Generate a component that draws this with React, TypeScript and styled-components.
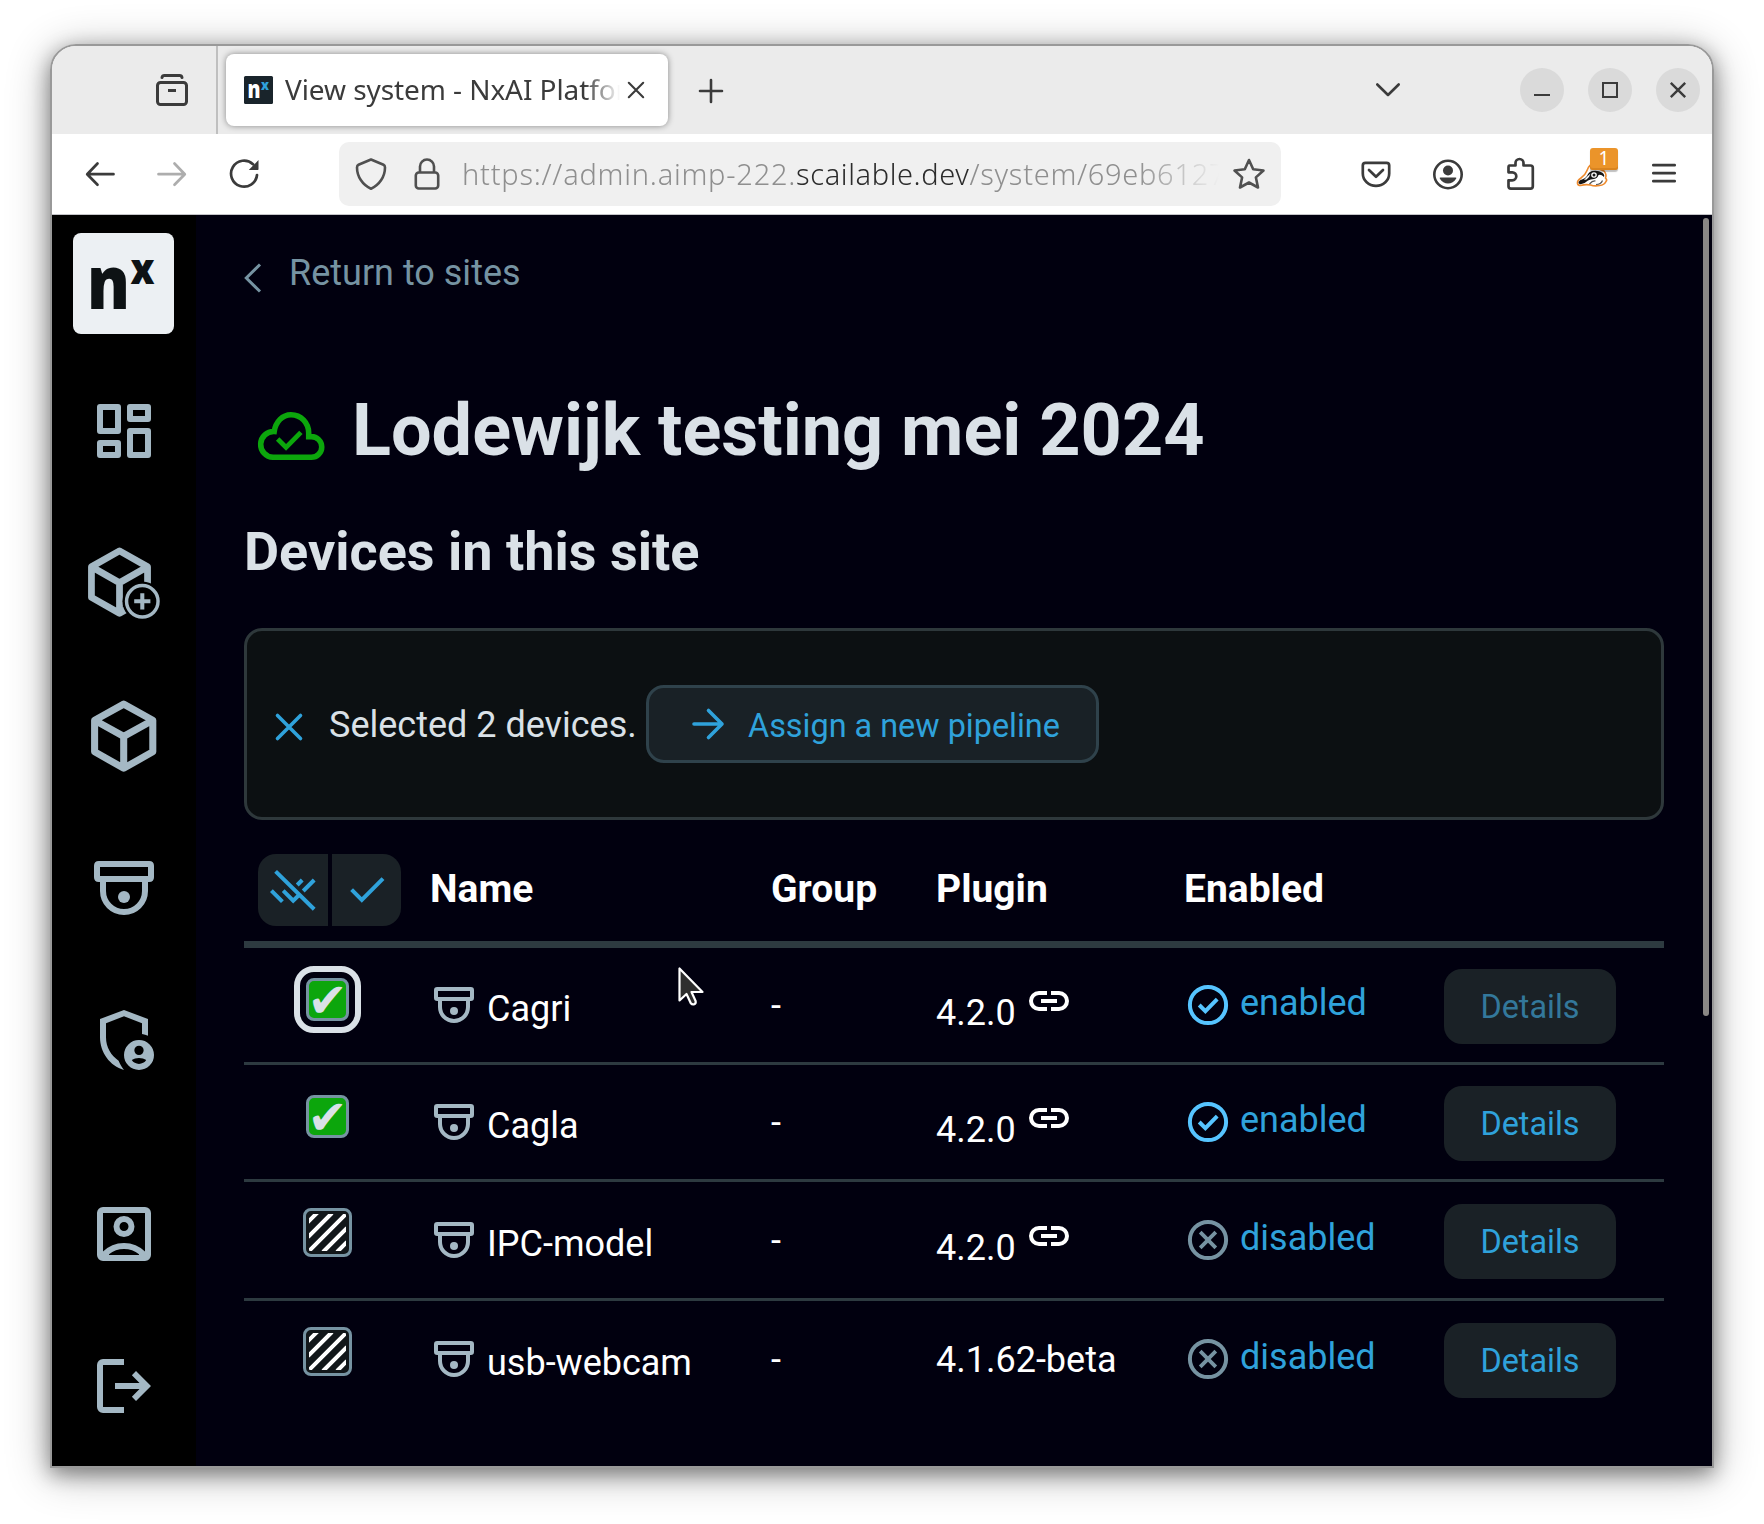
import React from "react";
import styled, { createGlobalStyle } from "styled-components";

const color = {
  chrome: "#ebebeb",
  ink: "#3b3b3b",
  page: "#01000f",
  text: "#dae1e7",
  nav: "#a4b8c4",
  muted: "#7693a2",
  link: "#2fa2db",
  surface: "#1a2126",
  line: "#2d3a40",
  green: "#0ca60c",
};

const GlobalStyle = createGlobalStyle`
  * { box-sizing: border-box; }
  body { margin: 0; background: #fff; overflow: hidden; }
  svg { display: block; flex: none; overflow: visible; }
  button { font: inherit; border: 0; padding: 0; margin: 0; color: inherit; background: none; }
`;

/* ---------- window ---------- */

const Desktop = styled.div`
  width: 1764px;
  height: 1524px;
  padding: 44px 50px;
`;

const Window = styled.div`
  width: 1664px;
  height: 1424px;
  border: 2px solid #999;
  border-radius: 26px 26px 0 0;
  overflow: hidden;
  display: flex;
  flex-direction: column;
  box-shadow: 0 6px 20px rgba(0, 0, 0, 0.4), 0 6px 44px rgba(0, 0, 0, 0.3);
  font-family: Roboto, sans-serif;
`;

const chromeFont = `font-family: "Noto Sans", "Open Sans", sans-serif;`;

const TabStrip = styled.div`
  height: 88px;
  flex: none;
  display: flex;
  align-items: center;
  background: ${color.chrome};
  color: ${color.ink};
  padding-right: 12px;
`;

const ViewSlot = styled.div`
  width: 166px;
  height: 88px;
  padding: 28px 0 0 104px;
  border-right: 2px solid #bfbfbf;
`;

const Tab = styled.div`
  width: 442px;
  height: 72px;
  margin-left: 8px;
  padding: 0 24px 0 18px;
  display: flex;
  align-items: center;
  background: #fff;
  border-radius: 8px;
  box-shadow: 0 0 6px rgba(0, 0, 0, 0.42);
`;

const TabTitle = styled.div`
  ${chromeFont}
  flex: 1;
  margin: -3px 8px 0 12px;
  overflow: hidden;
  white-space: nowrap;
  font-size: 28px;
  letter-spacing: -0.08px;
  line-height: 40px;
  mask-image: linear-gradient(to right, #000 calc(100% - 36px), transparent);
`;

const PlusSlot = styled.div`
  margin: 2px auto 0 31px;
`;

const WindowButtons = styled.div`
  display: flex;
  gap: 24px;
  margin-left: 120px;
`;

const RoundButton = styled.div`
  width: 44px;
  height: 44px;
  border-radius: 50%;
  background: #dadada;
  display: grid;
  place-items: center;
`;

const Toolbar = styled.div`
  height: 81px;
  flex: none;
  display: flex;
  align-items: center;
  background: #fff;
  border-bottom: 1px solid #c4c4c8;
  padding: 0 32px;
  color: ${color.ink};
`;

const HistoryButtons = styled.div`
  display: flex;
  gap: 40px;
  width: 255px;
`;

const AddressBar = styled.div`
  width: 942px;
  height: 64px;
  border-radius: 10px;
  background: #f0f0f0;
  display: flex;
  align-items: center;
  padding: 0 16px;
  color: #505050;
`;

const LockSlot = styled.div`
  margin-left: 24px;
`;

const Address = styled.div`
  ${chromeFont}
  width: 759px;
  margin: 0 12px 0 19px;
  overflow: hidden;
  white-space: nowrap;
  font-size: 29px;
  font-weight: 300;
  line-height: 44px;
  color: #8f8f8f;
  mask-image: linear-gradient(to right, #000 calc(100% - 84px), transparent calc(100% - 2px));
`;

const UrlPart = styled.span<{ $spacing: number; $strong?: boolean }>`
  letter-spacing: ${(p) => p.$spacing}px;
  color: ${(p) => (p.$strong ? "#2c2c2c" : "inherit")};
`;

const ToolbarActions = styled.div`
  margin-left: auto;
  display: flex;
  align-items: center;
  gap: 40px;
`;

const Extension = styled.div`
  position: relative;
`;

const Badge = styled.span`
  ${chromeFont}
  position: absolute;
  left: 14px;
  top: -10px;
  width: 28px;
  height: 22px;
  border-radius: 3px;
  background: #eb942a;
  box-shadow: 0 2px 1px rgba(0, 0, 0, 0.25), inset 0 -2px 0 #d98420;
  color: #fff;
  font-size: 19px;
  line-height: 20px;
  text-align: center;
`;

/* ---------- application ---------- */

const AppArea = styled.div`
  flex: 1;
  min-height: 0;
  display: flex;
  background: ${color.page};
`;

const Sidebar = styled.nav`
  width: 144px;
  background: #000;
  color: ${color.nav};
  display: flex;
  flex-direction: column;
  align-items: center;
  padding: 18px 0 44px;
`;

const Logo = styled.div`
  width: 101px;
  height: 101px;
  border-radius: 8px;
  background: #ecf0f3;
  margin: 0 1px 61px 0;
`;

const NavGroup = styled.div`
  display: flex;
  flex-direction: column;
  gap: 80.3px;
`;

const NavFooter = styled(NavGroup)`
  margin-top: auto;
`;

const Main = styled.main`
  flex: 1;
  position: relative;
  padding: 0 48px;
  color: ${color.text};
`;

const Scrollbar = styled.div`
  position: absolute;
  right: 3px;
  top: 3px;
  width: 6px;
  height: 798px;
  border-radius: 3px;
  background: #8a8785;
`;

const BackLink = styled.a`
  display: flex;
  align-items: center;
  height: 60px;
  margin-top: 28px;
  gap: 27px;
  font-size: 36px;
  color: ${color.muted};
  svg { margin-top: 9px; }
`;

const Title = styled.h1`
  margin: 84px 0 0;
  padding-left: 11px;
  height: 88px;
  display: flex;
  align-items: center;
  gap: 25px;
  font-size: 72px;
  line-height: 88px;
  font-weight: 700;
  svg { margin-top: 10px; color: ${color.green}; }
`;

const Subtitle = styled.h2`
  margin: 47px 0 0;
  height: 60px;
  line-height: 60px;
  font-size: 54px;
  font-weight: 700;
`;

const SelectionPanel = styled.section`
  margin-top: 46px;
  width: 1420px;
  height: 192px;
  border: 3px solid #2e383b;
  border-radius: 18px;
  background: #0c1012;
  display: flex;
  align-items: center;
  padding-left: 28px;
  font-size: 36px;
  svg { color: ${color.link}; }
  > svg { margin-top: 6px; }
`;

const SelectedText = styled.span`
  margin: 2px 11px 0 26px;
  width: 306px;
  white-space: nowrap;
`;

const AssignButton = styled.button`
  width: 453px;
  height: 78px;
  border: 3px solid #2f424b;
  border-radius: 18px;
  background: #192126;
  color: ${color.link};
  font-size: 32.4px;
  display: flex;
  align-items: center;
  padding: 0 0 0 43px;
  gap: 24px;
  span { padding-top: 4px; white-space: nowrap; }
  svg { margin-top: -1px; }
`;

const columns = "186px 341px 165px 248px 260px 1fr";

const TableHead = styled.div`
  display: grid;
  grid-template-columns: ${columns};
  width: 1420px;
  height: 128px;
  padding-top: 34px;
  border-bottom: 7px solid ${color.line};
  font-size: 39px;
  font-weight: 700;
  color: #fff;
  line-height: 71px;
`;

const HeadCell = styled.div``;

const SelectButtons = styled.div`
  display: flex;
  gap: 4px;
  padding-left: 14px;
`;

const SelectButton = styled.button<{ $side: "left" | "right" }>`
  width: ${(p) => (p.$side === "left" ? 70 : 69)}px;
  height: 72px;
  background: ${color.surface};
  color: ${color.link};
  border-radius: ${(p) => (p.$side === "left" ? "18px 0 0 18px" : "0 18px 18px 0")};
  display: grid;
  place-items: center;
`;

const Row = styled.div<{ $tall?: boolean }>`
  display: grid;
  grid-template-columns: ${columns};
  width: 1420px;
  height: ${(p) => (p.$tall ? 119 : 117)}px;
  padding-top: ${(p) => (p.$tall ? 1 : 0)}px;
  font-size: 36px;
  line-height: 42px;
  color: #fff;
  &:not(:last-child) { border-bottom: 3px solid ${color.line}; }
`;

const CheckCell = styled.div<{ $checked: boolean }>`
  display: flex;
  justify-content: center;
  padding: ${(p) => (p.$checked ? 30 : 25)}px 19px 0 0;
`;

const CheckBox = styled.div<{ $checked: boolean; $focus?: boolean }>`
  width: ${(p) => (p.$checked ? 43 : 49)}px;
  height: ${(p) => (p.$checked ? 43 : 49)}px;
  border: 3px solid ${color.muted};
  border-radius: 8px;
  background: ${(p) => (p.$checked ? color.green : "#12171a")};
  color: ${color.text};
  outline: ${(p) => (p.$focus ? `6px solid ${color.text}` : "none")};
  outline-offset: 6.5px;
  font-family: "DejaVu Sans", sans-serif;
  font-size: 48px;
  line-height: 36px;
  display: flex;
  align-items: center;
  justify-content: center;
`;

const NameCell = styled.div`
  display: flex;
  gap: 9px;
  padding-top: 33px;
  span { padding-top: 7px; }
  svg { color: ${color.nav}; }
`;

const GroupCell = styled.div`
  padding-top: 37px;
`;

const PluginCell = styled.div<{ $linked: boolean }>`
  display: flex;
  gap: 9px;
  padding-top: ${(p) => (p.$linked ? 29 : 37)}px;
  span { padding-top: ${(p) => (p.$linked ? 15 : 0)}px; }
`;

const StateCell = styled.div<{ $on: boolean }>`
  display: flex;
  gap: 8px;
  padding-top: 33px;
  color: ${color.link};
  span { padding-top: 1px; }
  svg { color: ${(p) => (p.$on ? "#56c4ff" : color.muted)}; }
`;

const DetailsButton = styled.button<{ $dim?: boolean }>`
  width: 172px;
  height: 75px;
  margin-top: 21px;
  border-radius: 18px;
  background: ${color.surface};
  color: ${(p) => (p.$dim ? "#33789b" : color.link)};
  font-size: 32.4px;
`;

const Pointer = styled.div`
  position: absolute;
  left: 482px;
  top: 751px;
`;

/* ---------- icons ---------- */

type IconProps = { size?: number };

const Svg = ({
  size = 72,
  box = 24,
  stroke,
  children,
}: {
  size?: number;
  box?: number;
  stroke?: number;
  children: React.ReactNode;
}) => (
  <svg
    width={size}
    height={size}
    viewBox={`0 0 ${box} ${box}`}
    fill={stroke ? "none" : "currentColor"}
    stroke={stroke ? "currentColor" : "none"}
    strokeWidth={stroke}
  >
    {children}
  </svg>
);

const DashboardIcon = () => (
  <Svg>
    <path
      fillRule="evenodd"
      d="M4 3h6q1 0 1 1v8q0 1-1 1H4q-1 0-1-1V4q0-1 1-1zm1 2v6h4V5zM14 3h6q1 0 1 1v4q0 1-1 1h-6q-1 0-1-1V4q0-1 1-1zm1 2v2h4V5zM4 15h6q1 0 1 1v4q0 1-1 1H4q-1 0-1-1v-4q0-1 1-1zm1 2v2h4v-2zM14 11h6q1 0 1 1v8q0 1-1 1h-6q-1 0-1-1v-8q0-1 1-1zm1 2v6h4v-6z"
    />
  </Svg>
);

const CubeAddIcon = () => (
  <Svg stroke={2.25}>
    <path
      strokeLinejoin="round"
      d="M10.5 1.3l9.35 5.3v10.2l-9.35 5.3-9.35-5.3V6.6zM1.15 6.6l9.35 5.3 9.35-5.3M10.5 11.9v10.2"
    />
    <circle cx="18.1" cy="18.1" r="6.6" fill="#000" stroke="none" />
    <circle cx="18.1" cy="18.1" r="5.25" strokeWidth="1.15" />
    <path strokeWidth="1.35" d="M18.1 15.4v5.4M15.4 18.1h5.4" />
  </Svg>
);

const CubeIcon = () => (
  <Svg stroke={2.35}>
    <path
      strokeLinejoin="round"
      d="M11.9 1.35l9.7 5.4v10.5l-9.7 5.5-9.7-5.5V6.75zM2.2 6.75l9.7 5.4 9.7-5.4M11.9 12.1v10.6"
    />
  </Svg>
);

const CameraIcon = ({ size }: IconProps) => (
  <Svg size={size} stroke={2}>
    <path
      fill="currentColor"
      stroke="none"
      fillRule="evenodd"
      d="M3.6 3h16.8Q22 3 22 4.6v3.8q0 1.6-1.6 1.6H3.6Q2 10 2 8.4V4.6Q2 3 3.6 3zM4 5v3h16V5z"
    />
    <path d="M5 9.5V13a7 7 0 0 0 14 0V9.5" />
    <circle cx="12" cy="15" r="2" fill="currentColor" stroke="none" />
  </Svg>
);

const ShieldPersonIcon = () => (
  <Svg>
    <path d="M12 2L4 5v6.1C4 16.1 7.3 20.7 12 22c-.8-1-1.3-1.9-1.8-3.1C7.7 17.2 6 14.5 6 11.1V6.4l6-2.3 6 2.3V10c.7.1 1.4.3 2 .6V5z" />
    <path
      fillRule="evenodd"
      d="M17 12a5 5 0 1 1 0 10 5 5 0 0 1 0-10zm0 1.9a1.55 1.55 0 1 0 0 3.1 1.55 1.55 0 0 0 0-3.1zm-2.4 4.8c.9 1.7 3.9 1.7 4.8 0-1.2-.9-3.6-.9-4.8 0z"
    />
  </Svg>
);

const AccountBoxIcon = () => (
  <Svg>
    <path d="M5 17.85q1.35-1.325 3.138-2.087Q9.925 15 12 15t3.863.763Q17.65 16.525 19 17.85V5H5v12.85ZM12 13q-1.45 0-2.475-1.025Q8.5 10.95 8.5 9.5q0-1.45 1.025-2.475Q10.55 6 12 6q1.45 0 2.475 1.025Q15.5 8.05 15.5 9.5q0 1.45-1.025 2.475Q13.45 13 12 13Zm-7 8q-.825 0-1.413-.587Q3 19.825 3 19V5q0-.825.587-1.413Q4.175 3 5 3h14q.825 0 1.413.587Q21 4.175 21 5v14q0 .825-.587 1.413Q19.825 21 19 21ZM7 19h10v-.25q-1.05-.875-2.325-1.312Q13.4 17 12 17t-2.675.438Q8.05 17.875 7 18.75V19Zm5-8q.625 0 1.062-.438Q13.5 10.125 13.5 9.5t-.438-1.062Q12.625 8 12 8t-1.062.438Q10.5 8.875 10.5 9.5t.438 1.062Q11.375 11 12 11Z" />
  </Svg>
);

const LogoutIcon = () => (
  <Svg>
    <path d="M5 21q-.825 0-1.412-.587T3 19V5q0-.825.588-1.412T5 3h7v2H5v14h7v2H5Zm11-4-1.375-1.45 2.55-2.55H9v-2h8.175l-2.55-2.55L16 7l5 5-5 5Z" />
  </Svg>
);

const CloudDoneIcon = () => (
  <Svg stroke={1.85}>
    <path d="M6 19.1A4.3 4.3 0 0 1 6.4 10.5C6.9 7.2 9.2 4.9 12 4.9c3.4 0 5.9 2.8 5.9 6.1v1.2h.9a3.45 3.45 0 0 1 0 6.900z" />
    <path strokeWidth="1.6" d="M7.55 13l2.800 2.800 4.950-5" />
  </Svg>
);

const LinkIcon = () => (
  <Svg size={48}>
    <path d="M11 17H7q-2.075 0-3.537-1.463Q2 14.075 2 12t1.463-3.538Q4.925 7 7 7h4v2H7q-1.25 0-2.125.875T4 12q0 1.25.875 2.125T7 15h4Zm-3-4v-2h8v2Zm5 4v-2h4q1.25 0 2.125-.875T20 12q0-1.25-.875-2.125T17 9h-4V7h4q2.075 0 3.538 1.462Q22 9.925 22 12q0 2.075-1.462 3.537Q19.075 17 17 17Z" />
  </Svg>
);

const StateIcon = ({ on }: { on: boolean }) => (
  <Svg size={48} stroke={2}>
    <circle cx="12" cy="12" r="9.05" />
    {on ? <path d="M7.600 12l3.100 3.100 5.900-6" /> : <path strokeWidth="1.900" d="M8.100 8.100l7.800 7.800M15.900 8.100l-7.800 7.800" />}
  </Svg>
);

const Stripes = () => (
  <svg width="37" height="37" viewBox="0 0 37 37">
    <defs>
      <clipPath id="stripes">
        <rect width="37" height="37" rx="1" />
      </clipPath>
    </defs>
    <path
      clipPath="url(#stripes)"
      stroke="#fff"
      strokeWidth="4"
      d="M-2 9L9 -2M-1 23L23 -1M0 37L37 0M14 38L38 14M28 38L38 28"
    />
  </svg>
);

const BadgerIcon = () => (
  <svg width="32" height="32" viewBox="0 0 32 32">
    <path
      d="M1.500 25.500Q1 22.500 5 20q4-2.500 6-7.500 1.500-4 3-5l14 5.500q3 3.500 1.500 7 2 2 .5 3.500-1.500 3.500-6.500 4-5 1-9-.5Q10 26 4.500 27.500 2 27.500 1.500 25.500z"
      fill="#fff"
      stroke="#ee8a2c"
      strokeWidth="1.600"
    />
    <path
      d="M2.500 25q0-2.500 3.500-3.500 3-.5 5-3.500 1.500-4 5-5 6-1 10 1.500 3 2 2 4.500-3-3-5.500-2-1 3.500-4.500 4-3.500 0-6 1.500-2.500 2.500-6.500 3.500-2.500.5-3-1z"
      fill="#161616"
    />
    <path d="M8 22q4-4.500 6.500-6.500-1 4-4 6z" fill="#fff" />
    <circle cx="18" cy="17" r="2.800" fill="#fff" />
    <circle cx="18" cy="17" r="1.500" fill="#161616" />
    <path d="M13.500 26q3-3.500 6-3M20 26.500q5 0 6.500-4" fill="none" stroke="#555" strokeWidth="1.200" />
  </svg>
);

/* ---------- data ---------- */

type Device = { name: string; plugin: string; linked: boolean; on: boolean; focus?: boolean };

const devices: Device[] = [
  { name: "Cagri", plugin: "4.2.0", linked: true, on: true, focus: true },
  { name: "Cagla", plugin: "4.2.0", linked: true, on: true },
  { name: "IPC-model", plugin: "4.2.0", linked: true, on: false },
  { name: "usb-webcam", plugin: "4.1.62-beta", linked: false, on: false },
];

const BrowserTabs = () => (
  <TabStrip>
    <ViewSlot>
      <Svg size={32} box={32} stroke={3}>
        <rect x="1.5" y="8.5" width="29" height="22" rx="3" />
        <path strokeLinecap="round" d="M6 3.5q.4-2 2.4-2h15.2q2 0 2.4 2" />
        <path d="M12 16.5h8" />
      </Svg>
    </ViewSlot>
    <Tab>
      <svg width="29" height="28" viewBox="0 0 29 28">
        <rect width="29" height="28" rx="1.5" fill="#19242b" />
        <text x="3.5" y="22" fill="#fff" fontFamily="Open Sans, sans-serif" fontWeight="800" fontSize="24" textLength="13" lengthAdjust="spacingAndGlyphs">n</text>
        <text x="17" y="13.5" fill="#2fa2db" fontFamily="Open Sans, sans-serif" fontWeight="800" fontSize="14" textLength="8" lengthAdjust="spacingAndGlyphs">x</text>
      </svg>
      <TabTitle>View system - NxAI Platform</TabTitle>
      <Svg size={16} box={16} stroke={2.1}>
        <path strokeLinecap="round" d="M.8.8l14.4 14.4M15.2.8L.8 15.2" />
      </Svg>
    </Tab>
    <PlusSlot>
      <Svg size={24} box={24} stroke={2.6}>
        <path strokeLinecap="round" d="M12 1v22M1 12h22" />
      </Svg>
    </PlusSlot>
    <Svg size={24} box={24} stroke={2.6}>
      <path strokeLinecap="round" strokeLinejoin="round" d="M1.3 6.5L12 17 22.7 6.5" />
    </Svg>
    <WindowButtons>
      <RoundButton>
        <Svg size={16} box={16} stroke={2}><path d="M0 13h16" /></Svg>
      </RoundButton>
      <RoundButton>
        <Svg size={16} box={16} stroke={2}><path d="M1 1h14v14H1z" /></Svg>
      </RoundButton>
      <RoundButton>
        <Svg size={16} box={16} stroke={2.4}><path d="M.8.8l14.4 14.4M15.2.8L.8 15.2" /></Svg>
      </RoundButton>
    </WindowButtons>
  </TabStrip>
);

const BrowserToolbar = () => (
  <Toolbar>
    <HistoryButtons>
      <Svg size={32} box={32} stroke={2.7}>
        <path strokeLinecap="round" strokeLinejoin="round" d="M13.5 5.5L3.2 16.2l10.3 10.6M3.5 16.2h26" />
      </Svg>
      <Svg size={32} box={32} stroke={2.7}>
        <path stroke="#adadad" strokeLinecap="round" strokeLinejoin="round" d="M18.5 5.5l10.3 10.7-10.3 10.6M28.5 16.2h-26" />
      </Svg>
      <Svg size={32} box={32} stroke={2.7}>
        <path strokeLinecap="round" d="M29 17A13 13 0 1 1 25 6.2" />
        <path fill="currentColor" stroke="none" d="M30.5 2v9.300q0 .7-.7.7h-9z" />
      </Svg>
    </HistoryButtons>
    <AddressBar>
      <Svg size={32} box={32} stroke={2.6}>
        <path strokeLinejoin="round" d="M16 1.500L28.500 6.800q1.500.7 1.500 2.700c0 9-5.500 17.500-14 21.200C7.500 27 2 18.500 2 9.500q0-2 1.500-2.700z" />
      </Svg>
      <LockSlot>
        <Svg size={32} box={32} stroke={2.6}>
          <rect x="4.800" y="14.500" width="22.400" height="16" rx="3" />
          <path d="M9 14V8.500a7 7 0 0 1 14 0V14" />
        </Svg>
      </LockSlot>
      <Address>
        <UrlPart $spacing={0.75}>https://admin.aimp-222.</UrlPart>
        <UrlPart $spacing={0.6} $strong>scailable.dev</UrlPart>
        <UrlPart $spacing={0.7}>/system/69eb6127</UrlPart>
      </Address>
      <Svg size={32} box={32} stroke={2.6}>
        <path strokeLinejoin="round" d="M16 2l4.200 9.300 10.300 1.200-7.600 6.900 2.100 10.100L16 24.500l-9 5 2.100-10.100-7.600-6.900 10.300-1.200z" />
      </Svg>
    </AddressBar>
    <ToolbarActions>
      <Svg size={32} box={32} stroke={2.7}>
        <path d="M5.500 4.800h21q2.700 0 2.700 2.700v8a13.200 12.400 0 0 1-26.400 0v-8q0-2.700 2.700-2.700z" />
        <path strokeLinecap="round" strokeLinejoin="round" d="M9 12l7 6.800 7-6.800" />
      </Svg>
      <Svg size={32} box={32} stroke={2.6}>
        <circle cx="16" cy="16.500" r="13.700" />
        <circle cx="16" cy="12.500" r="5" fill="currentColor" stroke="none" />
        <path fill="currentColor" stroke="none" d="M8.500 19.500h15q1.300 0 .6 1.300c-3.400 6.300-12.800 6.300-16.200 0q-.7-1.300.6-1.300z" />
      </Svg>
      <Svg size={32} box={32} stroke={2.7}>
        <path strokeLinejoin="round" d="M5.500 7.500h6V5a4 4 0 0 1 8 0v2.500h7q2.300 0 2.300 2.300v18.500q0 2.300-2.300 2.300H7q-2.500 0-2.500-2.300v-6h3.800a4 4 0 0 0 0-8H4.500V9.500q0-2 1-2z" />
      </Svg>
      <Extension>
        <BadgerIcon />
        <Badge>1</Badge>
      </Extension>
      <Svg size={32} box={32} stroke={2.7}>
        <path strokeLinecap="round" d="M5.300 7.200h21.400M5.300 15.200h21.400M5.300 23.200h21.400" />
      </Svg>
    </ToolbarActions>
  </Toolbar>
);

const DeviceRow = ({ device }: { device: Device }) => (
  <Row $tall={!device.on}>
    <CheckCell $checked={device.on}>
      <CheckBox $checked={device.on} $focus={device.focus}>
        {device.on ? "✔" : <Stripes />}
      </CheckBox>
    </CheckCell>
    <NameCell>
      <CameraIcon size={48} />
      <span>{device.name}</span>
    </NameCell>
    <GroupCell>-</GroupCell>
    <PluginCell $linked={device.linked}>
      <span>{device.plugin}</span>
      {device.linked && <LinkIcon />}
    </PluginCell>
    <StateCell $on={device.on}>
      <StateIcon on={device.on} />
      <span>{device.on ? "enabled" : "disabled"}</span>
    </StateCell>
    <DetailsButton $dim={device.focus}>Details</DetailsButton>
  </Row>
);

export default function App() {
  return (
    <Desktop>
      <GlobalStyle />
      <Window>
        <BrowserTabs />
        <BrowserToolbar />
        <AppArea>
          <Sidebar>
            <Logo>
              <svg width="101" height="101" viewBox="0 0 101 101" fill="#0d1214" fontFamily="Open Sans, sans-serif" fontWeight="800">
                <text x="14" y="76" fontSize="75" textLength="43" lengthAdjust="spacingAndGlyphs">n</text>
                <text x="57.5" y="50.500" fontSize="43" textLength="24" lengthAdjust="spacingAndGlyphs">x</text>
              </svg>
            </Logo>
            <NavGroup>
              <DashboardIcon />
              <CubeAddIcon />
              <CubeIcon />
              <CameraIcon />
              <ShieldPersonIcon />
            </NavGroup>
            <NavFooter>
              <AccountBoxIcon />
              <LogoutIcon />
            </NavFooter>
          </Sidebar>
          <Main>
            <BackLink>
              <svg width="18" height="30" viewBox="0 0 18 30" fill="none" stroke="currentColor" strokeWidth="3">
                <path d="M16 1.500L2.300 15 16 28.500" />
              </svg>
              Return to sites
            </BackLink>
            <Title>
              <CloudDoneIcon />
              Lodewijk testing mei 2024
            </Title>
            <Subtitle>Devices in this site</Subtitle>
            <SelectionPanel>
              <Svg size={28} box={28} stroke={3.6}>
                <path strokeLinecap="round" d="M2.500 2.500l23 23M25.500 2.500l-23 23" />
              </Svg>
              <SelectedText>Selected 2 devices.</SelectedText>
              <AssignButton>
                <Svg size={32} box={32} stroke={3.6}>
                  <path strokeLinecap="round" strokeLinejoin="round" d="M2 16h28M16.500 2.500L30 16 16.500 29.500" />
                </Svg>
                <span>Assign a new pipeline</span>
              </AssignButton>
            </SelectionPanel>
            <TableHead>
              <SelectButtons>
                <SelectButton $side="left">
                  <Svg size={48} stroke={2}>
                    <path d="M3.300 2.700l19.300 18.900M1.200 12.300l5.500 5.500M7.100 12.300l5 5 2.400-2.300M22.600 7l-5.500 5.500M16.600 7l-2.500 2.500" />
                  </Svg>
                </SelectButton>
                <SelectButton $side="right">
                  <Svg size={48} stroke={2}>
                    <path d="M4.300 11.800l5.100 5.100L20 6.300" />
                  </Svg>
                </SelectButton>
              </SelectButtons>
              <HeadCell>Name</HeadCell>
              <HeadCell>Group</HeadCell>
              <HeadCell>Plugin</HeadCell>
              <HeadCell>Enabled</HeadCell>
            </TableHead>
            <div>
              {devices.map((device) => (
                <DeviceRow key={device.name} device={device} />
              ))}
            </div>
            <Scrollbar />
            <Pointer>
              <svg width="28" height="40" viewBox="0 0 28 40" fill="#2e2e2e" stroke="#fff" strokeWidth="2.200">
                <path strokeLinejoin="round" d="M1.500 2.500v32l7-6.500 4.300 9.300q1.500 1.700 3.500.9 1.900-1 1.300-3.200L13.500 26h11z" />
              </svg>
            </Pointer>
          </Main>
        </AppArea>
      </Window>
    </Desktop>
  );
}
